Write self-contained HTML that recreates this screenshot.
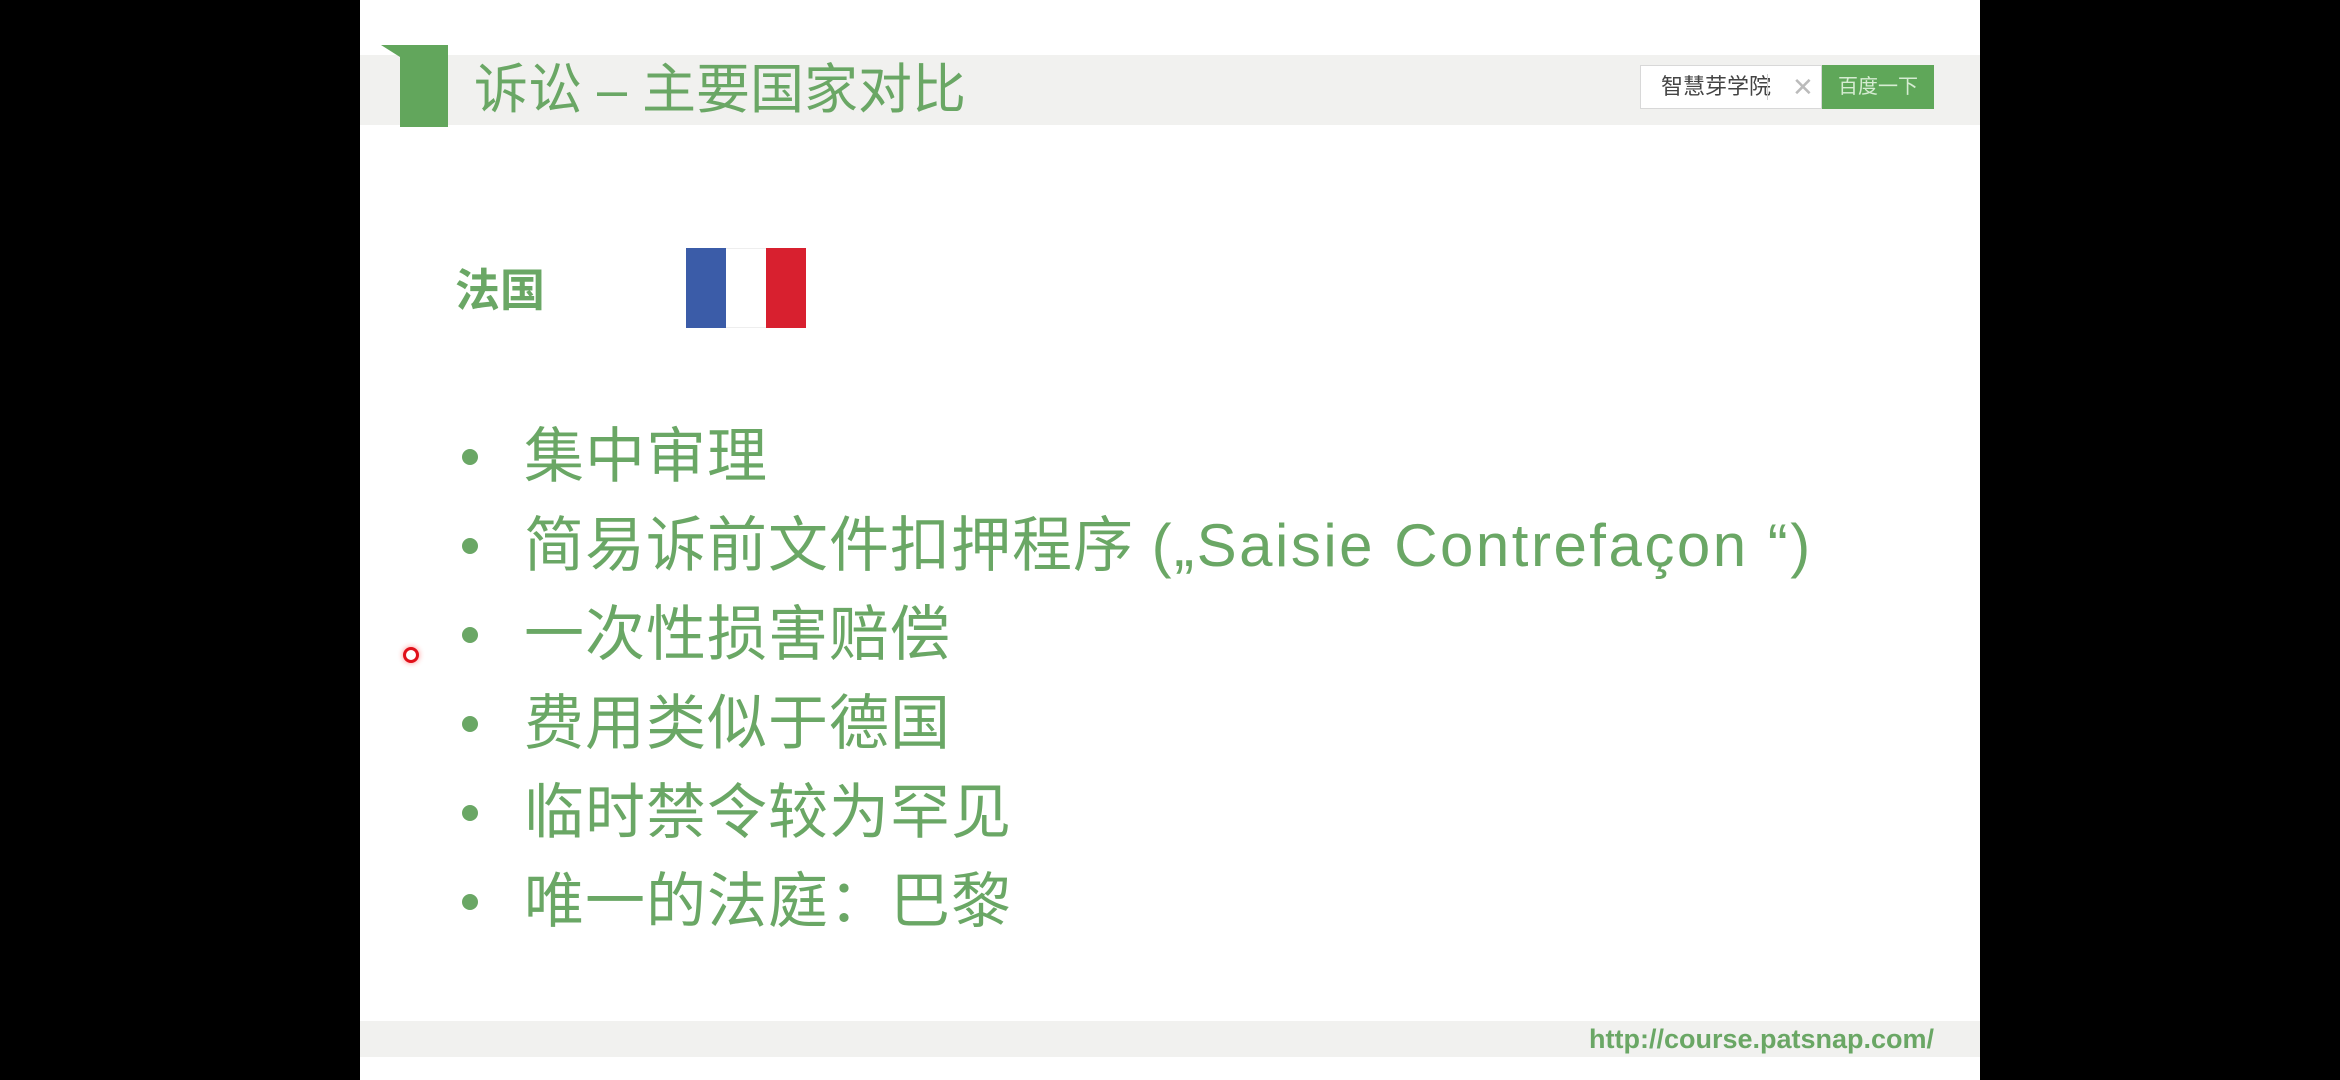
<!DOCTYPE html>
<html><head><meta charset="utf-8"><style>
body{margin:0;width:2340px;height:1080px;background:#000;position:relative;overflow:hidden;font-family:"Liberation Sans","Noto Sans CJK SC",sans-serif}
.slide{position:absolute;left:360px;top:0;width:1620px;height:1080px;background:#fff}
.a{position:absolute}
.g{color:#6aa765}
.li{position:absolute;left:524px;font-size:60px;line-height:70px;color:#6aa765;white-space:nowrap;letter-spacing:1px}
.dot{position:absolute;left:462px;width:16px;height:16px;border-radius:50%;background:#6aa765}
</style></head><body>
<div class="slide"></div>
<div class="a" style="left:360px;top:55px;width:1620px;height:70px;background:#f1f1ef"></div>
<div class="a" style="left:400px;top:45px;width:48px;height:82px;background:#62a65c"></div>
<div class="a" style="left:381px;top:45px;width:0;height:0;border-top:12px solid #62a65c;border-left:19px solid transparent"></div>
<div class="a g" style="left:474px;top:58px;font-size:54px;line-height:64px;color:#6aa765">诉讼 – 主要国家对比</div>
<div class="a" style="left:1640px;top:65px;width:180px;height:42px;background:#fff;border:1px solid #d8d8d8"></div>
<div class="a" style="left:1661px;top:72px;font-size:22px;line-height:30px;color:#444">智慧芽学院</div>
<div class="a" style="left:1767px;top:74px;width:1px;height:26px;background:#ccc"></div>
<div class="a" style="left:1792px;top:70px;font-size:26px;line-height:34px;color:#bbb">✕</div>
<div class="a" style="left:1822px;top:65px;width:112px;height:44px;background:#5fa759;color:#d6ecd2;font-size:20px;line-height:44px;text-align:center">百度一下</div>
<div class="a" style="left:455px;top:265px;font-size:45px;line-height:52px;font-weight:bold;color:#6aa765">法国</div>
<div class="a" style="left:686px;top:248px;width:40px;height:80px;background:#3b5ca8"></div>
<div class="a" style="left:726px;top:248px;width:40px;height:78px;background:#fff;border-top:1px solid #eee;border-bottom:1px solid #eee"></div>
<div class="a" style="left:766px;top:248px;width:40px;height:80px;background:#d8202f"></div>
<div class="dot" style="top:449px"></div><div class="li" style="top:422px">集中审理</div>
<div class="dot" style="top:538px"></div><div class="li" style="top:511px">简易诉前文件扣押程序 <span style="letter-spacing:2.5px">(„Saisie Contrefaçon “)</span></div>
<div class="dot" style="top:627px"></div><div class="li" style="top:600px">一次性损害赔偿</div>
<div class="dot" style="top:716px"></div><div class="li" style="top:689px">费用类似于德国</div>
<div class="dot" style="top:805px"></div><div class="li" style="top:778px">临时禁令较为罕见</div>
<div class="dot" style="top:894px"></div><div class="li" style="top:867px">唯一的法庭：巴黎</div>
<div class="a" style="left:403px;top:647px;width:10px;height:10px;border-radius:50%;border:3px solid #e0101a;background:#fff;box-shadow:0 0 6px #f88"></div>
<div class="a" style="left:360px;top:1021px;width:1620px;height:36px;background:#f1f1ef"></div>
<div class="a" style="left:1589px;top:1022px;font-size:27px;line-height:34px;font-weight:bold;color:#6aa765">http://course.patsnap.com/</div>
</body></html>
